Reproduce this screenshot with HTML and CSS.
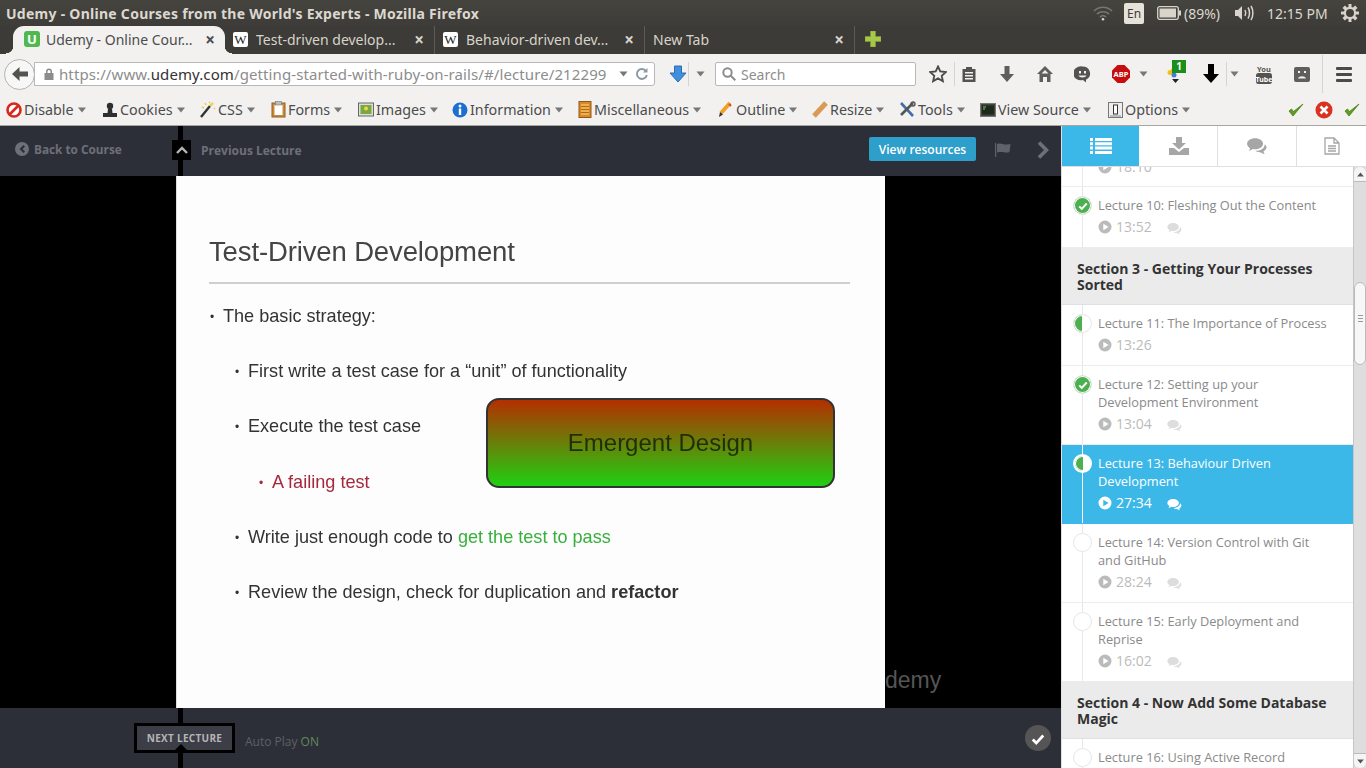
FILE: index.html
```html
<!DOCTYPE html>
<html lang="en">
<head>
    <meta charset="UTF-8">
    <meta name="viewport" content="width=device-width, initial-scale=1.0">
    <title>Udemy - Online Courses from the World's Experts</title>
    <link rel="stylesheet" href="styles.css">
</head>
<body>
    <svg class="sprite" width="0" height="0">
        <symbol id="play" viewBox="0 0 14 14"><path fill-rule="evenodd" d="M7 .5a6.5 6.5 0 1 0 0 13 6.5 6.5 0 0 0 0-13zM5.300 3.700 10.600 7l-5.300 3.300z"/></symbol>
        <symbol id="talk" viewBox="0 0 16 14"><path d="M6.500 1C3 1 .3 2.900.3 5.300c0 1.400.9 2.600 2.300 3.400-.1.800-.6 1.500-1.200 2 1.300-.1 2.500-.6 3.400-1.300.5.100 1.100.2 1.700.2 3.500 0 6.200-1.900 6.200-4.300S10 1 6.500 1z"/><path d="M14 5.600c.1 2.900-2.900 5.100-6.500 5.100l-.8 0c1.100.9 2.600 1.200 4 1.100.9.700 2.100 1.200 3.400 1.300-.6-.5-1-1.200-1.100-1.900 1.500-.7 2.400-1.900 2.400-3.200 0-.9-.6-1.700-1.400-2.400z"/></symbol>
        <symbol id="tick" viewBox="0 0 12 12"><path d="M1.500 6.500 4.500 9.500 10.500 3" fill="none" stroke="currentColor" stroke-width="2.400"/></symbol>
        <symbol id="caret" viewBox="0 0 8 6"><path d="M0 .5h8L4 5.500z"/></symbol>
    </svg>

    <!-- ubuntu panel -->
    <div class="panel">
        <div class="win-title">Udemy - Online Courses from the World's Experts - Mozilla Firefox</div>
        <div class="tray">
            <svg class="wifi" width="20" height="16" viewBox="0 0 20 16" fill="none" stroke="#77756f" stroke-width="1.700"><path d="M1 6c5-5 13-5 18 0M4 9c3.300-3 8.700-3 12 0M7 12c1.700-1.500 4.300-1.500 6 0"/><circle cx="10" cy="14.300" r="1.300" fill="#d8d4cb" stroke="none"/></svg>
            <span class="lang">En</span>
            <svg class="battery" width="24" height="14" viewBox="0 0 24 14"><rect x=".7" y=".7" width="20.600" height="12.600" rx="2" fill="none" stroke="#d8d4cb" stroke-width="1.300"/><rect x="2.500" y="2.500" width="16.500" height="9" fill="#d8d4cb"/><rect x="22" y="4.500" width="2" height="5" fill="#d8d4cb"/></svg>
            <span class="pct">(89%)</span>
            <svg class="vol" width="20" height="18" viewBox="0 0 20 18" fill="none" stroke="#d8d4cb" stroke-width="1.500"><path d="M1 6h3l4-4v14l-4-4H1z" fill="#d8d4cb" stroke="none"/><path d="M11 6c1 2 1 4 0 6M14 3.500c2 3 2 8 0 11M17 2c2.500 4 2.500 10 0 14"/></svg>
            <span class="clock">12:15 PM</span>
            <svg class="gear" width="18" height="18" viewBox="0 0 18 18" fill="#d8d4cb"><path fill-rule="evenodd" d="M7.500 0h3v3l1.500.6 2.100-2.100 2.400 2.400L14.400 6l.6 1.500h3v3h-3l-.6 1.500 2.100 2.100-2.400 2.400-2.100-2.100-1.500.6v3h-3v-3L6 14.400 3.900 16.500 1.500 14.100 3.600 12 3 10.500H0v-3h3L3.600 6 1.500 3.900 3.900 1.500 6 3.600 7.500 3zM9 5a4 4 0 1 0 0 8 4 4 0 0 0 0-8z"/></svg>
        </div>
    </div>

    <!-- tab strip -->
    <div class="tabs">
        <div class="tab tab-active">
            <span class="fav-u">U</span>
            <span class="tab-name">Udemy - Online Cour...</span>
            <span class="tab-x">×</span>
        </div>
        <div class="tab">
            <span class="fav-w">W</span>
            <span class="tab-name">Test-driven develop...</span>
            <span class="tab-x">×</span>
        </div>
        <div class="tab">
            <span class="fav-w">W</span>
            <span class="tab-name">Behavior-driven dev...</span>
            <span class="tab-x">×</span>
        </div>
        <div class="tab tab-new">
            <span class="tab-name">New Tab</span>
            <span class="tab-x">×</span>
        </div>
        <svg class="plus" width="16" height="16" viewBox="0 0 16 16"><path d="M5.500 0h5v5.500H16v5h-5.500V16h-5v-5.500H0v-5h5.500z" fill="#a5c84a" stroke="#7e9e33" stroke-width=".6"/></svg>
    </div>

    <!-- nav bar -->
    <div class="navbar">
        <div class="back-btn">
            <svg width="16" height="14" viewBox="0 0 16 14"><path d="M7.500 0 0 7l7.500 7V9.500H16v-5H7.500z" fill="#55534f"/></svg>
        </div>
        <div class="urlbar">
            <svg class="lock" width="10" height="12" viewBox="0 0 10 12" fill="#8c8c8c"><path fill-rule="evenodd" d="M2 5V3.500a3 3 0 0 1 6 0V5h1.500v7H.5V5zM3.500 5h3V3.500a1.500 1.500 0 0 0-3 0z"/></svg>
            <span class="url">https://www.<b>udemy.com</b>/getting-started-with-ruby-on-rails/#/lecture/212299</span>
            <svg class="caret url-caret" width="9" height="6"><use href="#caret"/></svg>
            <svg class="reload" width="14" height="14" viewBox="0 0 14 14" fill="none" stroke="#8c99a5" stroke-width="2"><path d="M11 4a5 5 0 1 0 .8 4"/><path d="M12.500 1v4.500H8" fill="#8c99a5" stroke="none"/></svg>
        </div>
        <svg class="dl-blue" width="18" height="18" viewBox="0 0 18 18"><path d="M5.500 1h7v7H17l-8 9-8-9h4.500z" fill="#3f8fdc" stroke="#2a6fb5"/></svg>
        <span class="nav-sep"></span>
        <svg class="caret dl-caret" width="9" height="6"><use href="#caret"/></svg>
        <div class="searchbar">
            <svg width="14" height="14" viewBox="0 0 14 14" fill="none" stroke="#8c8c8c" stroke-width="2"><circle cx="5.500" cy="5.500" r="4.200"/><path d="m8.500 8.500 4.800 4.800"/></svg>
            <span>Search</span>
        </div>
        <svg class="ni ni-star" width="18" height="18" viewBox="0 0 18 18"><path d="m9 1.500 2.300 5 5.500.6-4.100 3.700 1.200 5.400L9 13.400l-4.900 2.800 1.200-5.400L1.200 7.100l5.500-.6z" fill="none" stroke="#4a4a48" stroke-width="1.800"/></svg>
        <span class="nav-sep sep-star"></span>
        <svg class="ni ni-list" width="14" height="16" viewBox="0 0 14 16"><path fill-rule="evenodd" d="M4 1h6v2h3.500v13H.5V3H4zM3 6v1.500h8V6zm0 3v1.500h8V9zm0 3v1.500h8V12z" fill="#55534f"/></svg>
        <svg class="ni ni-down" width="14" height="16" viewBox="0 0 14 16"><path d="M4.500 0h5v8H14l-7 8-7-8h4.500z" fill="#605e5a"/></svg>
        <svg class="ni ni-home" width="16" height="16" viewBox="0 0 16 16"><path fill-rule="evenodd" d="M8 0l8 8h-2.500v8h-3.500v-5H6v5H2.500V8H0zM8 4 4.500 7.500H11.500z" fill="#605e5a"/></svg>
        <svg class="ni ni-smile" width="17" height="17" viewBox="0 0 17 17"><path fill-rule="evenodd" d="M8.500.5a7.500 7 0 0 1 3.500 13.200L12 16.500l-3-2.500a7.500 7 0 1 1-.5-13.500zM5 5v2.500h2V5zm5 0v2.500h2V5zM4.500 9.500c1 2.500 7 2.500 8 0z" fill="#55534f"/></svg>
        <svg class="ni ni-abp" width="18" height="18" viewBox="0 0 18 18"><path d="M5.500 0h7L18 5.500v7L12.500 18h-7L0 12.500v-7z" fill="#c70d0d"/><text x="9" y="12" class="abp-text">ABP</text></svg>
        <svg class="caret abp-caret" width="9" height="6"><use href="#caret"/></svg>
        <div class="ni ni-color">
            <svg width="14" height="20" viewBox="0 0 14 20"><circle cx="8" cy="6" r="2.500" fill="#e0352b"/><circle cx="4" cy="8.500" r="2.500" fill="#f4c20d"/><circle cx="8" cy="11" r="2.500" fill="#3f7fe0"/><path d="M6 15h7l-3.500 4z" fill="#222"/></svg>
            <span class="badge">1</span>
        </div>
        <svg class="ni ni-blackdown" width="16" height="20" viewBox="0 0 16 20"><path d="M5 0h6v10h5l-8 9-8-9h5z" fill="#000"/></svg>
        <span class="nav-sep sep-black"></span>
        <svg class="caret black-caret" width="9" height="6"><use href="#caret"/></svg>
        <svg class="ni ni-yt" width="16" height="20" viewBox="0 0 16 20"><text x="8" y="8" class="yt-top">You</text><rect x="0" y="9" width="16" height="11" rx="2.500" fill="#55534f"/><text x="8" y="18" class="yt-bot">Tube</text></svg>
        <svg class="ni ni-sad" width="16" height="15" viewBox="0 0 16 15"><path fill-rule="evenodd" d="M2 0h12a2 2 0 0 1 2 2v11a2 2 0 0 1-2 2H2a2 2 0 0 1-2-2V2a2 2 0 0 1 2-2zm2 4v2h2V4zm6 0v2h2V4zM4 11.500h8C11 8.500 5 8.500 4 11.500z" fill="#605e5a"/></svg>
        <span class="nav-sep sep-menu"></span>
        <div class="ni ni-menu"><i></i><i></i><i></i></div>
    </div>

    <!-- web developer toolbar -->
    <div class="devbar">
        <div class="dev-item item-disable"><svg width="16" height="16" viewBox="0 0 16 16"><circle cx="8" cy="8" r="6.500" fill="#fff" stroke="#d6281c" stroke-width="2.600"/><path d="m3.500 12.500 9-9" stroke="#d6281c" stroke-width="2.600"/></svg>Disable<svg class="caret" width="8" height="6"><use href="#caret"/></svg></div>
        <div class="dev-item item-cookies"><svg width="16" height="16" viewBox="0 0 16 16" fill="#2f2f2f"><circle cx="8" cy="4" r="3.200"/><path d="M6 7h4l.5 4H15v4H1v-4h4.500z"/></svg>Cookies<svg class="caret" width="8" height="6"><use href="#caret"/></svg></div>
        <div class="dev-item item-css"><svg width="16" height="17" viewBox="0 0 16 17"><path d="m1 16 9-11" stroke="#333" stroke-width="2.400"/><path d="m10 5 3-3" stroke="#e9d24a" stroke-width="2.400"/><path d="M5 2l1 2M14 7l1 1M9 1l1 1M2 6l2 1" stroke="#e9c93a" stroke-width="1.400"/></svg>CSS<svg class="caret" width="8" height="6"><use href="#caret"/></svg></div>
        <div class="dev-item item-forms"><svg width="15" height="17" viewBox="0 0 15 17"><rect x="1" y="2" width="13" height="14" fill="#c98a3c" stroke="#94601f"/><rect x="3.500" y="4" width="8" height="10" fill="#fff"/><rect x="4.500" y=".5" width="6" height="3.500" fill="#bdbdbd" stroke="#777" stroke-width=".6"/></svg>Forms<svg class="caret" width="8" height="6"><use href="#caret"/></svg></div>
        <div class="dev-item item-images"><svg width="16" height="15" viewBox="0 0 16 15"><rect x=".5" y="1" width="15" height="13" fill="#ddd" stroke="#666"/><rect x="2.500" y="3" width="11" height="9" fill="#79a83f"/><circle cx="8" cy="6.500" r="2" fill="#f1d54c"/></svg>Images<svg class="caret" width="8" height="6"><use href="#caret"/></svg></div>
        <div class="dev-item item-info"><svg width="16" height="16" viewBox="0 0 16 16"><circle cx="8" cy="8" r="7.500" fill="#1c6fd0"/><rect x="6.800" y="6.500" width="2.400" height="6.500" fill="#fff"/><circle cx="8" cy="4" r="1.500" fill="#fff"/></svg>Information<svg class="caret" width="8" height="6"><use href="#caret"/></svg></div>
        <div class="dev-item item-misc"><svg width="14" height="17" viewBox="0 0 14 17"><rect x="1" y=".5" width="12" height="16" fill="#d98a26" stroke="#8f5a17"/><rect x="3" y="3" width="8" height="11" fill="#f0b04d"/><path d="M3 5.500h8M3 8.500h8M3 11.500h8" stroke="#a96c1d"/></svg>Miscellaneous<svg class="caret" width="8" height="6"><use href="#caret"/></svg></div>
        <div class="dev-item item-outline"><svg width="16" height="17" viewBox="0 0 16 17"><path d="m3 12 9-10" stroke="#f0a028" stroke-width="4"/><path d="M1 16l1-5 3 2.500z" fill="#333"/><path d="m11 3 2 2" stroke="#d94a2a" stroke-width="2"/></svg>Outline<svg class="caret" width="8" height="6"><use href="#caret"/></svg></div>
        <div class="dev-item item-resize"><svg width="16" height="17" viewBox="0 0 16 17"><path d="m2 15 12-13" stroke="#d99a55" stroke-width="5"/></svg>Resize<svg class="caret" width="8" height="6"><use href="#caret"/></svg></div>
        <div class="dev-item item-tools"><svg width="17" height="17" viewBox="0 0 17 17" fill="none"><path d="m2 2 12 13" stroke="#3f6fa8" stroke-width="2.600"/><path d="m14 2-12 12" stroke="#555" stroke-width="2.600"/><circle cx="14" cy="3" r="2" stroke="#555" stroke-width="1.400"/></svg>Tools<svg class="caret" width="8" height="6"><use href="#caret"/></svg></div>
        <div class="dev-item item-source"><svg width="16" height="14" viewBox="0 0 16 14"><rect x=".5" y=".5" width="15" height="13" fill="#444" stroke="#777"/><rect x="2" y="2.500" width="12" height="9" fill="#1b2a1b"/><path d="M3 4h3M3 6h2" stroke="#7ecb5a"/></svg>View Source<svg class="caret" width="8" height="6"><use href="#caret"/></svg></div>
        <div class="dev-item item-options"><svg width="15" height="16" viewBox="0 0 15 16"><rect x=".5" y=".5" width="14" height="15" fill="#eee" stroke="#777"/><rect x="5.500" y="3" width="4" height="9" fill="#fff" stroke="#333"/><path d="M2 14h11" stroke="#888"/></svg>Options<svg class="caret" width="8" height="6"><use href="#caret"/></svg></div>
        <div class="dev-status">
            <svg width="16" height="14" viewBox="0 0 16 14"><path d="m1 8 4 5L15 1 5.500 8.500 3.500 6z" fill="#5f9e1f" stroke="#4a7d12" stroke-width=".8"/></svg>
            <svg width="18" height="18" viewBox="0 0 18 18"><circle cx="9" cy="9" r="8.500" fill="#d9321f"/><path d="m5.500 5.500 7 7m0-7-7 7" stroke="#fff" stroke-width="2.600"/></svg>
            <svg width="16" height="14" viewBox="0 0 16 14"><path d="m1 8 4 5L15 1 5.500 8.500 3.500 6z" fill="#5f9e1f" stroke="#4a7d12" stroke-width=".8"/></svg>
        </div>
    </div>

    <div class="app">
        <div class="player">
            <div class="player-top">
                <div class="back-course">
                    <svg width="14" height="14" viewBox="0 0 14 14"><path fill-rule="evenodd" d="M7 0a7 7 0 1 1 0 14A7 7 0 0 1 7 0zm1.500 3L4.500 7l4 4 1.500-1.500L7.500 7 10 4.500z" fill="#6d7078"/></svg>
                    <span>Back to Course</span>
                </div>
                <div class="prev-wrap">
                    <div class="chap-up">
                        <svg width="12" height="8" viewBox="0 0 12 8"><path d="M1 7l5-5 5 5" fill="none" stroke="#b5b5b5" stroke-width="2.400"/></svg>
                    </div>
                    <span class="prev-label">Previous Lecture</span>
                </div>
                <a class="resources">View resources</a>
                <svg class="flag" width="16" height="14" viewBox="0 0 16 14"><path d="M0 0h1.200v14H0z" fill="#5f626b"/><path d="M2 1c4-1.500 6 1 10 .5l3.500-.5-1 8c-4 1.500-7-1-12.500.5z" fill="#5f626b"/></svg>
                <svg class="next-arrow" width="12" height="18" viewBox="0 0 12 18"><path d="M2 1.500 9.500 9 2 16.500" fill="none" stroke="#6d7078" stroke-width="3.600"/></svg>
            </div>

            <div class="video">
                <div class="slide">
                    <h2>Test-Driven Development</h2>
                    <ul class="points">
                        <li>The basic strategy:</li>
                        <li class="sub">First write a test case for a “unit” of functionality</li>
                        <li class="sub">Execute the test case</li>
                        <li class="subsub">A failing test</li>
                        <li class="sub">Write just enough code to <span class="pass">get the test to pass</span></li>
                        <li class="sub">Review the design, check for duplication and <b>refactor</b></li>
                    </ul>
                    <div class="emergent">Emergent Design</div>
                </div>
                <div class="mark">demy</div>
            </div>

            <div class="player-foot">
                <div class="next-tip">NEXT LECTURE</div>
                <span class="autoplay">Auto Play <em>ON</em></span>
                <span class="done"><svg width="14" height="14"><use href="#tick"/></svg></span>
            </div>
        </div>

        <div class="side">
            <div class="side-tabs">
                <div class="stab stab-on">
                    <svg width="22" height="16" viewBox="0 0 22 16" fill="#fff"><path d="M0 0h3v3H0zM5 0h17v3H5zM0 4.300h3v3H0zM5 4.300h17v3H5zM0 8.600h3v3H0zM5 8.600h17v3H5zM0 13h3v3H0zM5 13h17v3H5z"/></svg>
                </div>
                <div class="stab">
                    <svg width="20" height="18" viewBox="0 0 20 18" fill="#a6a6a6"><path d="M7 0h6v6h4l-7 6.500L3 6h4z"/><path d="M0 11h5l5 4 5-4h5v7H0z"/></svg>
                </div>
                <div class="stab">
                    <svg width="22" height="18" viewBox="0 0 16 14" fill="#a6a6a6"><use href="#talk"/></svg>
                </div>
                <div class="stab">
                    <svg width="16" height="18" viewBox="0 0 16 18" fill="none" stroke="#a6a6a6" stroke-width="1.300"><path d="M1 1h9l5 5v11H1zM10 1v5h5M4 9h8M4 11.500h8M4 14h8"/></svg>
                </div>
            </div>
            <div class="side-body">
                <div class="curriculum">
                    <div class="lecture lec-cut">
                        <div class="lec-meta"><svg class="ic-play" width="14" height="14"><use href="#play"/></svg>18:10</div>
                    </div>
                    <div class="lecture">
                        <span class="dot dot-done"><svg width="10" height="10"><use href="#tick"/></svg></span>
                        <div class="lec-title">Lecture 10: Fleshing Out the Content</div>
                        <div class="lec-meta"><svg class="ic-play" width="14" height="14"><use href="#play"/></svg>13:52<svg class="ic-talk" width="15" height="13"><use href="#talk"/></svg></div>
                    </div>
                    <div class="section-head">Section 3 - Getting Your Processes Sorted</div>
                    <div class="lecture">
                        <span class="dot dot-half"></span>
                        <div class="lec-title">Lecture 11: The Importance of Process</div>
                        <div class="lec-meta"><svg class="ic-play" width="14" height="14"><use href="#play"/></svg>13:26</div>
                    </div>
                    <div class="lecture">
                        <span class="dot dot-done"><svg width="10" height="10"><use href="#tick"/></svg></span>
                        <div class="lec-title">Lecture 12: Setting up your Development Environment</div>
                        <div class="lec-meta"><svg class="ic-play" width="14" height="14"><use href="#play"/></svg>13:04<svg class="ic-talk" width="15" height="13"><use href="#talk"/></svg></div>
                    </div>
                    <div class="lecture lec-current">
                        <span class="dot dot-half"></span>
                        <div class="lec-title">Lecture 13: Behaviour Driven Development</div>
                        <div class="lec-meta"><svg class="ic-play" width="14" height="14"><use href="#play"/></svg>27:34<svg class="ic-talk" width="15" height="13"><use href="#talk"/></svg></div>
                    </div>
                    <div class="lecture">
                        <span class="dot"></span>
                        <div class="lec-title">Lecture 14: Version Control with Git and GitHub</div>
                        <div class="lec-meta"><svg class="ic-play" width="14" height="14"><use href="#play"/></svg>28:24<svg class="ic-talk" width="15" height="13"><use href="#talk"/></svg></div>
                    </div>
                    <div class="lecture">
                        <span class="dot"></span>
                        <div class="lec-title">Lecture 15: Early Deployment and Reprise</div>
                        <div class="lec-meta"><svg class="ic-play" width="14" height="14"><use href="#play"/></svg>16:02<svg class="ic-talk" width="15" height="13"><use href="#talk"/></svg></div>
                    </div>
                    <div class="section-head">Section 4 - Now Add Some Database Magic</div>
                    <div class="lecture">
                        <span class="dot"></span>
                        <div class="lec-title">Lecture 16: Using Active Record</div>
                    </div>
                </div>
                <div class="scrollbar">
                    <span class="sb-btn"><svg width="7" height="5" viewBox="0 0 8 6"><path d="M0 5.500h8L4 .5z"/></svg></span>
                    <span class="sb-track">
                        <span class="sb-thumb"><i></i></span>
                    </span>
                    <span class="sb-btn sb-down"><svg width="7" height="5"><use href="#caret"/></svg></span>
                </div>
            </div>
        </div>
    </div>
</body>
</html>
```
FILE: styles.css
```css
* {
    box-sizing: border-box;
}
html, body {
    margin: 0;
    height: 100%;
}
body {
    width: 1366px;
    height: 768px;
    overflow: hidden;
    display: flex;
    flex-direction: column;
    font-family: "Noto Sans", sans-serif;
    background-color: #f2f1f0;
}
.sprite {
    position: absolute;
}

/* panel */
.panel {
    height: 26px;
    flex: none;
    display: flex;
    align-items: center;
    justify-content: space-between;
    padding-left: 6px;
    background: linear-gradient(#45443f, #3d3c38);
    color: #dcd8cf;
}
.win-title {
    font-size: 14px;
    font-weight: 700;
    letter-spacing: .27px;
    white-space: nowrap;
}
.tray {
    display: flex;
    align-items: center;
    font-size: 14px;
}
.wifi { margin-right: 11px; }
.lang {
    width: 20px;
    height: 21px;
    margin-right: 13px;
    border-radius: 2px;
    background-color: #e6e2da;
    color: #3c3b37;
    font-size: 12px;
    line-height: 21px;
    text-align: center;
}
.battery { margin-right: 3px; }
.pct { width: 46px; }
.vol { margin: 0 13px 0 4px; }
.clock { width: 74px; }
.gear { margin-right: 7px; }

/* tabs */
.tabs {
    height: 28px;
    flex: none;
    display: flex;
    align-items: center;
    background-color: #3c3b37;
    color: #d8d4cb;
    font-size: 14px;
}
.tab {
    width: 210px;
    height: 28px;
    display: flex;
    align-items: center;
    padding: 0 0 2px 8px;
    border-right: 1px solid #5c5b56;
    flex: none;
}
.tab-active {
    position: relative;
    width: 212px;
    margin-left: 13px;
    margin-right: 0;
    padding-left: 11px;
    border-right: none;
    border-radius: 11px 11px 0 0;
    background-color: #f2f1f0;
    color: #4c4c4c;
}
.tab-active::before,
.tab-active::after {
    content: "";
    position: absolute;
    bottom: 0;
    width: 7px;
    height: 8px;
}
.tab-active::before {
    left: -7px;
    background: radial-gradient(circle at 0 0, #3c3b37 7px, #f2f1f0 7.5px);
}
.tab-active::after {
    right: -7px;
    background: radial-gradient(circle at 100% 0, #3c3b37 7px, #f2f1f0 7.5px);
}
.tab-active + .tab {
    width: 210px;
}
.tab-active .tab-x {
    margin-right: 8px;
}
.tab-name {
    flex: 1;
    white-space: nowrap;
    overflow: hidden;
}
.tab-x {
    width: 14px;
    margin-right: 8px;
    font-size: 17px;
    font-weight: 700;
    line-height: 1;
    text-align: center;
}
.fav-u {
    width: 16px;
    height: 16px;
    margin-right: 6px;
    border-radius: 3px;
    background-color: #4fb94f;
    color: #fff;
    font-size: 13px;
    font-weight: 700;
    line-height: 16px;
    text-align: center;
}
.fav-w {
    width: 15px;
    height: 15px;
    margin-right: 8px;
    border-radius: 2px;
    background-color: #fff;
    color: #222;
    font-family: "Liberation Serif", serif;
    font-size: 13px;
    line-height: 15px;
    text-align: center;
}
.plus { margin-left: 10px; margin-bottom: 2px; }

/* nav bar */
.navbar {
    height: 42px;
    flex: none;
    display: flex;
    align-items: center;
    padding: 0 0 2px 4px;
    background-color: #f2f1f0;
}
.back-btn {
    width: 31px;
    height: 31px;
    flex: none;
    z-index: 1;
    display: flex;
    align-items: center;
    justify-content: center;
    border: 1px solid #b3b3b3;
    border-radius: 50%;
    background-color: #f7f7f7;
}
.urlbar {
    width: 621px;
    height: 24px;
    margin-left: -1px;
    flex: none;
    display: flex;
    align-items: center;
    padding: 0 4px 0 9px;
    border: 1px solid #b8b8b8;
    border-radius: 0 3px 3px 0;
    background-color: #fff;
}
.lock { margin-right: 5px; }
.url {
    flex: 1;
    font-size: 15px;
    letter-spacing: .1px;
    color: #8d8d8d;
    white-space: nowrap;
}
.url b {
    font-weight: 400;
    color: #333;
}
.caret { fill: #777; flex: none; }
.url-caret { margin-right: 7px; }
.reload { margin-right: 1px; }
.dl-blue { margin-left: 14px; }
.nav-sep {
    width: 1px;
    height: 24px;
    flex: none;
    background-color: #d5d4d2;
}
.dl-caret { margin-left: 7px; }
.navbar > .nav-sep:first-of-type { margin-left: 1px; }
.searchbar {
    width: 201px;
    height: 24px;
    margin-left: 10px;
    flex: none;
    display: flex;
    align-items: center;
    gap: 5px;
    padding-left: 6px;
    border: 1px solid #b8b8b8;
    border-radius: 2px;
    background-color: #fff;
    color: #8d8d8d;
    font-size: 14px;
}
.ni { flex: none; }
.ni-star { margin-left: 13px; }
.sep-star { margin-left: 7px; }
.ni-list { margin-left: 7px; }
.ni-down { margin-left: 24px; }
.ni-home { margin-left: 23px; }
.ni-smile { margin-left: 21px; }
.ni-abp { margin-left: 21px; }
.abp-text {
    fill: #fff;
    font-size: 7.5px;
    font-weight: 700;
    text-anchor: middle;
}
.abp-caret { margin-left: 9px; }
.ni-color {
    width: 14px;
    height: 20px;
    margin-left: 18px;
    position: relative;
}
.badge {
    position: absolute;
    left: 6px;
    top: -4px;
    width: 14px;
    height: 13px;
    background-color: #1a8f1a;
    color: #fff;
    font-size: 10px;
    font-weight: 700;
    line-height: 13px;
    text-align: center;
}
.ni-blackdown { margin-left: 23px; }
.sep-black { margin-left: 7px; }
.black-caret { margin-left: 3px; }
.ni-yt { margin-left: 17px; }
.yt-top {
    fill: #55534f;
    font-size: 7.5px;
    font-weight: 700;
    text-anchor: middle;
}
.yt-bot {
    fill: #fff;
    font-size: 7px;
    font-weight: 700;
    text-anchor: middle;
}
.ni-sad { margin-left: 22px; }
.sep-menu {
    margin-left: 12px;
    height: 38px;
}
.ni-menu {
    width: 16px;
    margin-left: 13px;
    display: flex;
    flex-direction: column;
    gap: 3px;
}
.ni-menu i {
    height: 3px;
    border-radius: 1px;
    background-color: #4a4a48;
}

/* developer toolbar */
.devbar {
    height: 29px;
    flex: none;
    display: flex;
    align-items: center;
    padding: 0 0 2px 6px;
    background-color: #f2f1f0;
    color: #4c4c4c;
    font-size: 14.3px;
}
.dev-item {
    display: flex;
    align-items: center;
    flex: none;
    white-space: nowrap;
}
.dev-item > svg:first-child { margin-right: 2px; }
.dev-item .caret { margin-left: 4px; }
.item-disable { width: 96px; }
.item-cookies { width: 98px; }
.item-css { width: 71px; }
.item-forms { width: 87px; }
.item-images { width: 94px; }
.item-info { width: 126px; }
.item-misc { width: 140px; }
.item-outline { width: 94px; }
.item-resize { width: 87px; }
.item-tools { width: 81px; }
.item-source { width: 128px; }
.item-options { width: 100px; }
.dev-status {
    margin-left: 80px;
    display: flex;
    align-items: center;
    gap: 11px;
}

/* main */
.app {
    flex: 1;
    display: flex;
    min-height: 0;
    border-top: 1px solid #a8a69f;
}
.player {
    width: 1061px;
    flex: none;
    display: flex;
    flex-direction: column;
    font-family: "Open Sans", sans-serif;
}
.player-top {
    height: 50px;
    flex: none;
    display: flex;
    align-items: center;
    padding-bottom: 2px;
    background-color: #2d2f38;
    font-size: 12px;
    font-weight: 700;
    color: #6d7078;
}
.back-course {
    width: 172px;
    display: flex;
    align-items: center;
    gap: 5px;
    margin-bottom: 2px;
    padding-left: 15px;
    font-size: 11.8px;
}
.prev-wrap {
    flex: 1;
    align-self: stretch;
    display: flex;
    align-items: center;
    position: relative;
}
.prev-wrap::before {
    content: "";
    position: absolute;
    left: 6px;
    top: 0;
    bottom: -2px;
    width: 5px;
    background-color: #000;
}
.chap-up {
    width: 19px;
    height: 20px;
    z-index: 1;
    display: flex;
    align-items: center;
    justify-content: center;
    background-color: #000;
}
.prev-label {
    margin-left: 10px;
}
.resources {
    width: 107px;
    height: 24px;
    margin-right: 19px;
    margin-bottom: 2px;
    border-radius: 2px;
    background-color: #2e9ecb;
    color: #fff;
    font-weight: 600;
    line-height: 25px;
    text-align: center;
}
.flag { margin-right: 26px; }
.next-arrow { margin-right: 12px; }

.video {
    flex: 1;
    position: relative;
    min-height: 0;
    padding-left: 176px;
    background-color: #000;
    overflow: hidden;
}
.slide {
    width: 709px;
    height: 100%;
    position: relative;
    z-index: 1;
    padding: 59px 0 0 33px;
    border-left: 1px solid #ddd;
    background-color: #fdfdfd;
    font-family: "Liberation Sans", sans-serif;
    color: #333;
}
.slide h2 {
    width: 641px;
    height: 49px;
    margin: 0 0 0 -1px;
    border-bottom: 2px solid #cfcfcf;
    font-size: 27.5px;
    font-weight: 400;
    letter-spacing: -.13px;
    line-height: 33px;
    color: #444;
    filter: blur(.3px);
}
.points {
    margin: 0;
    padding: 5px 0 0;
    list-style: none;
    font-size: 18.1px;
    filter: blur(.3px);
}
.points li {
    height: 55.200px;
    line-height: 55px;
    white-space: nowrap;
}
.points li::before {
    content: "•";
    display: inline-block;
    width: 13px;
    font-size: 12px;
    vertical-align: 1px;
}
.points .sub { padding-left: 25px; }
.points .subsub {
    padding-left: 49px;
    color: #a5283c;
}
.pass { color: #37b03c; }
.emergent {
    position: absolute;
    left: 309px;
    top: 222px;
    width: 349px;
    height: 90px;
    border: 2px solid #333;
    border-radius: 13px;
    background: linear-gradient(#b42f00, #1fd012);
    color: #1f3008;
    font-size: 24px;
    line-height: 86px;
    text-align: center;
    filter: blur(.3px);
}
.mark {
    position: absolute;
    left: 885px;
    bottom: 13px;
    color: #555;
    font-family: "Liberation Sans", sans-serif;
    font-size: 23px;
    line-height: 30px;
}

.player-foot {
    height: 60px;
    flex: none;
    position: relative;
    display: flex;
    align-items: center;
    padding-left: 134px;
    background-color: #2d2f38;
}
.player-foot::before {
    content: "";
    position: absolute;
    left: 178px;
    top: 0;
    bottom: 0;
    width: 5px;
    background-color: #000;
}
.next-tip {
    width: 101px;
    height: 30px;
    z-index: 1;
    position: relative;
    border: 3px solid #000;
    background-color: #3b3d47;
    color: #b5b5b5;
    font-size: 10px;
    font-weight: 700;
    letter-spacing: .3px;
    line-height: 24px;
    text-align: center;
}
.next-tip::after {
    content: "";
    position: absolute;
    left: 38px;
    bottom: 0;
    border: 6px solid transparent;
    border-top: 0;
    border-bottom-color: #000;
}
.autoplay {
    margin-left: 10px;
    padding-top: 6px;
    font-size: 12px;
    color: #5d6066;
}
.autoplay em {
    font-style: normal;
    color: #5f8a5f;
}
.done {
    width: 26px;
    height: 26px;
    margin-left: auto;
    margin-right: 10px;
    padding-top: 2px;
    display: flex;
    align-items: center;
    justify-content: center;
    border-radius: 50%;
    background-color: #555;
    color: #fff;
}

/* sidebar */
.side {
    flex: 1;
    display: flex;
    flex-direction: column;
    min-width: 0;
    background-color: #fff;
    font-family: "Open Sans", sans-serif;
    border-left: 1px solid #e0e0e0;
}
.side-tabs {
    height: 41px;
    flex: none;
    display: grid;
    grid-template-columns: 78px 78px 79px 1fr;
    border-bottom: 1px solid #dfdfdf;
}
.stab {
    display: flex;
    align-items: center;
    justify-content: center;
    border-right: 1px solid #dfdfdf;
}
.stab:last-child { border-right: none; }
.stab-on {
    border-right: 1px solid #fff;
    background-color: #3bb8e8;
}
.side-body {
    flex: 1;
    display: flex;
    min-height: 0;
}
.curriculum {
    flex: 1;
    min-width: 0;
    overflow: hidden;
}
.lecture {
    position: relative;
    padding: 9px 24px 11px 36px;
    border-bottom: 1px solid #ececec;
    font-size: 12.8px;
    line-height: 18px;
    color: #8a8a8a;
}
.lecture::before {
    content: "";
    position: absolute;
    left: 20px;
    top: 0;
    bottom: 0;
    width: 1px;
    background-color: #e8e8e8;
}
.lec-cut {
    height: 20px;
    padding: 0 24px 0 36px;
    overflow: hidden;
}
.lec-cut .lec-meta { margin-top: -9px; }
.lec-title { position: relative; }
.lec-meta {
    margin-top: 4px;
    height: 18px;
    display: flex;
    align-items: center;
    font-size: 14px;
    color: #bbb;
    fill: #bbb;
}
.ic-play { margin-right: 4px; }
.ic-talk {
    margin-left: 15px;
    margin-top: 3px;
    fill: #ddd;
}
.dot {
    position: absolute;
    left: 11px;
    top: 9px;
    width: 19px;
    height: 19px;
    border: 1px solid #e6e6e6;
    border-radius: 50%;
    background-color: #fff;
}
.dot-done {
    display: flex;
    align-items: center;
    justify-content: center;
    background-color: #4caf50;
    box-shadow: inset 0 0 0 1px #fff;
    color: #fff;
}
.dot-half {
    background: linear-gradient(90deg, #4caf50 50%, #fff 50%);
    box-shadow: inset 0 0 0 1px #fff;
}
.section-head {
    min-height: 57px;
    padding: 13px 8px 0 15px;
    border-bottom: 1px solid #e0e0e0;
    background-color: #ebebeb;
    font-size: 14px;
    font-weight: 700;
    line-height: 16px;
    color: #333;
}
.lec-current {
    background-color: #3bb8e8;
    border-bottom-color: #3bb8e8;
    color: #fff;
}
.lec-current::before { background-color: #fff; }
.lec-current .lec-meta {
    color: #fff;
    fill: #fff;
}
.lec-current .ic-talk { fill: #fff; }
.lec-current .dot { border: 2px solid #fff; }
.scrollbar {
    width: 13px;
    flex: none;
    display: flex;
    flex-direction: column;
    background-color: #dedede;
    border-left: 1px solid #c6c6c6;
}
.sb-btn {
    height: 14px;
    flex: none;
    display: flex;
    align-items: center;
    justify-content: center;
    border-radius: 6px 6px 0 0;
    background-color: #f5f5f5;
    fill: #555;
}
.sb-down { border-radius: 0 0 6px 6px; }
.sb-track {
    flex: 1;
    padding-top: 100px;
    border-top: 1px solid #bbb;
    border-bottom: 1px solid #bbb;
}
.sb-thumb {
    height: 83px;
    display: flex;
    justify-content: center;
    padding-top: 32px;
    border: 1px solid #bbb;
    border-radius: 6px;
    background-color: #f7f7f7;
}
.sb-thumb i {
    width: 5px;
    height: 8px;
    background: repeating-linear-gradient(#999 0 1px, transparent 1px 3px);
}
```
